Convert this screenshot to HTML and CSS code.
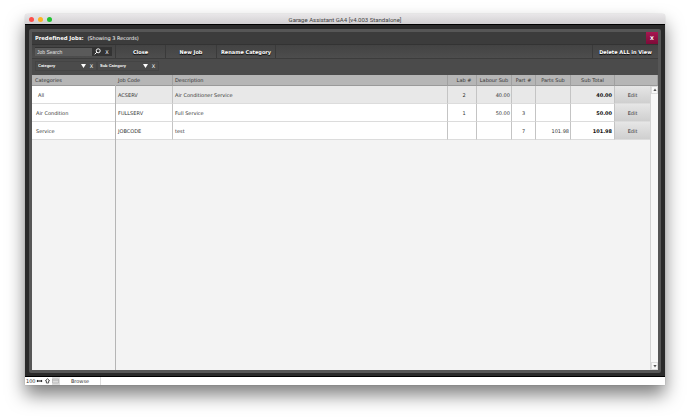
FILE: index.html
```
<!DOCTYPE html>
<html lang="en">

<head>
  <meta charset="UTF-8">
  <title>Garage Assistant GA4</title>
  <link rel="stylesheet" href="styles.css">
</head>

<body>
  <div class="window">
    <header class="titlebar">
      <div class="lights">
        <span class="light red"></span>
        <span class="light yellow"></span>
        <span class="light green"></span>
      </div>
      <span class="app-title">Garage Assistant GA4 [v4.003 Standalone]</span>
    </header>

    <div class="frame">
      <main class="panel">
        <div class="heading">
          <h1>Predefined Jobs:</h1>
          <span class="count">(Showing 3 Records)</span>
          <button class="close" type="button" aria-label="Close window">X</button>
        </div>

        <div class="toolbar">
          <form class="search">
            <input type="text" placeholder="Job Search" aria-label="Job Search">
            <button type="button" aria-label="Search">
              <svg class="glass" viewBox="0 0 7 7">
                <circle cx="4.2" cy="2.8" r="2" />
                <path d="M2.8 4.2L.7 6.3" />
              </svg>
            </button>
            <button type="button" aria-label="Clear search">X</button>
          </form>
          <button class="tool" type="button">Close</button>
          <button class="tool" type="button">New Job</button>
          <button class="tool" type="button">Rename Category</button>
          <button class="tool delete" type="button">Delete ALL in View</button>
        </div>

        <div class="filters">
          <div class="filter">
            <select aria-label="Category">
              <option>Category</option>
            </select>
            <svg class="arrow" viewBox="0 0 5 4"><path d="M0 0h5L2.5 4z" /></svg>
            <button type="button" aria-label="Clear category">X</button>
          </div>
          <div class="filter">
            <select aria-label="Sub Category">
              <option>Sub Category</option>
            </select>
            <svg class="arrow" viewBox="0 0 5 4"><path d="M0 0h5L2.5 4z" /></svg>
            <button type="button" aria-label="Clear sub category">X</button>
          </div>
        </div>

        <div class="content">
          <aside class="categories">
            <h2>Categories</h2>
            <ul>
              <li class="all"><a href="#">All</a></li>
              <li><a href="#">Air Condition</a></li>
              <li><a href="#">Service</a></li>
            </ul>
          </aside>

          <section class="jobs">
            <table>
              <colgroup>
                <col class="col-code">
                <col>
                <col class="col-lab">
                <col class="col-sub">
                <col class="col-part">
                <col class="col-sub">
                <col class="col-total">
                <col class="col-edit">
                <col class="col-scroll">
              </colgroup>
              <thead>
                <tr>
                  <th class="left">Job Code</th>
                  <th class="left">Description</th>
                  <th class="lab">Lab #</th>
                  <th>Labour Sub</th>
                  <th>Part #</th>
                  <th>Parts Sub</th>
                  <th>Sub Total</th>
                  <th colspan="2"></th>
                </tr>
              </thead>
              <tbody>
                <tr class="selected">
                  <td>ACSERV</td>
                  <td>Air Conditioner Service</td>
                  <td class="num lab">2</td>
                  <td class="money">40.00</td>
                  <td class="num"></td>
                  <td class="money"></td>
                  <td class="total">40.00</td>
                  <td class="action"><button type="button">Edit</button></td>
                  <td class="gutter"></td>
                </tr>
                <tr>
                  <td>FULLSERV</td>
                  <td>Full Service</td>
                  <td class="num lab">1</td>
                  <td class="money">50.00</td>
                  <td class="num">3</td>
                  <td class="money"></td>
                  <td class="total">50.00</td>
                  <td class="action"><button type="button">Edit</button></td>
                  <td class="gutter"></td>
                </tr>
                <tr>
                  <td>JOBCODE</td>
                  <td>test</td>
                  <td class="num lab"></td>
                  <td class="money"></td>
                  <td class="num">7</td>
                  <td class="money">101.98</td>
                  <td class="total">101.98</td>
                  <td class="action"><button type="button">Edit</button></td>
                  <td class="gutter"></td>
                </tr>
              </tbody>
            </table>
            <div class="scrollbar">
              <button type="button" aria-label="Scroll up">
                <svg viewBox="0 0 4 4"><path d="M2 .5L3.6 3H.4z" /></svg>
              </button>
              <button type="button" aria-label="Scroll down">
                <svg viewBox="0 0 4 4"><path d="M2 3.5L3.6 1H.4z" /></svg>
              </button>
            </div>
          </section>
        </div>
      </main>
    </div>

    <footer class="statusbar">
      <span class="zoom">100</span>
      <button type="button" aria-label="Zoom out">
        <svg viewBox="0 0 7 6"><path d="M.5 3L2 1.8v.7h3v-.7L6.5 3 5 4.2v-.7H2v.7z" /></svg>
      </button>
      <button type="button" aria-label="Zoom in">
        <svg viewBox="0 0 7 6"><path d="M3.5 .6L5.6 2.8H4.6V5H2.4V2.8H1.4z" fill="#fff" stroke="#333" stroke-width=".8" /></svg>
      </button>
      <button class="toggle" type="button" aria-label="Toggle toolbar">
        <svg viewBox="0 0 7 6"><path d="M.5 1h6v4h-6zM.5 2.2h6" fill="none" stroke="#aaa" stroke-width=".6" /></svg>
      </button>
      <span class="mode">Browse</span>
    </footer>
  </div>
</body>

</html>
```

FILE: styles.css
```
* {
  box-sizing: border-box;
}

body {
  margin: 0;
  height: 100vh;
  padding: 14px 25px 35px;
  background: #fff;
  font-family: "DejaVu Sans", Verdana, sans-serif;
  font-size: 5px;
  line-height: 8px;
  color: #333;
}

h1,
h2,
ul {
  margin: 0;
  padding: 0;
  font-size: inherit;
  list-style: none;
}

button,
input,
select {
  margin: 0;
  padding: 0;
  border: none;
  background: none;
  font: inherit;
  color: inherit;
}

a {
  color: inherit;
  text-decoration: none;
}

svg {
  display: block;
}

.window {
  display: flex;
  flex-direction: column;
  height: 100%;
  border-radius: 3px 3px 0 0;
  box-shadow: 0 10px 18px rgba(0, 0, 0, 0.5), 0 0 1px rgba(0, 0, 0, 0.4);
}

/* title bar */
.titlebar {
  display: grid;
  grid-template-columns: 1fr auto 1fr;
  align-items: center;
  height: 10px;
  border-radius: 3px 3px 0 0;
  background: linear-gradient(#e9e7e9, #d2d0d2);
}

.lights {
  display: flex;
  gap: 4px;
  padding-left: 4px;
}

.light {
  width: 5px;
  height: 5px;
  border-radius: 50%;
}

.red {
  background: #fc4f4b;
}

.yellow {
  background: #fdb424;
}

.green {
  background: #1fc331;
}

.app-title {
  padding-top: 1px;
  font-family: Roboto, sans-serif;
  font-size: 6px;
  color: #444;
}

/* dark frame */
.frame {
  flex: 1;
  display: flex;
  padding: 4px 4px 3px;
  border-top: 1px solid #000;
  border-bottom: 1px solid #000;
  background: #2a2a2a;
}

.panel {
  flex: 1;
  display: flex;
  flex-direction: column;
  border: 3px solid #565656;
  border-radius: 2px;
  background: #4b4b4b;
  color: #fff;
}

.heading {
  display: flex;
  align-items: center;
  gap: 4px;
  height: 12px;
  padding-left: 3px;
  background: #3c3c3c;
}

.heading h1 {
  font-family: "Noto Sans", sans-serif;
  font-size: 6px;
}

.close {
  align-self: stretch;
  width: 12px;
  margin-left: auto;
  background: linear-gradient(#a81650, #7d0b38);
  font-weight: bold;
}

.toolbar {
  display: flex;
  height: 15px;
  border-top: 1px solid #333;
  border-bottom: 1px solid #3c3c3c;
  background: linear-gradient(#434343, #4d4d4d);
}

.search {
  display: flex;
  align-items: center;
  width: 77px;
  height: 9px;
  margin: 2px 3px;
  background: #333;
}

.search input {
  flex: 1;
  min-width: 0;
  height: 8px;
  padding-left: 2px;
  background: #5a5a5a;
  font-family: "Liberation Sans", Arial, sans-serif;
}

.search input::placeholder {
  color: #e0e0e0;
}

.search button {
  width: 10px;
}

.glass {
  width: 7px;
  height: 7px;
  margin: auto;
  fill: none;
  stroke: #fff;
}

.tool {
  min-width: 51px;
  padding: 0 4px;
  border-right: 1px solid #3a3a3a;
  font-weight: bold;
  text-shadow: 0 1px 1px #000;
}

.search + .tool {
  border-left: 1px solid #3a3a3a;
}

.delete {
  min-width: 66px;
  margin-left: auto;
  border-right: none;
  border-left: 1px solid #3a3a3a;
}

.filters {
  display: flex;
  height: 16px;
  padding: 2px 3px 4px;
}

.filter {
  display: flex;
  align-items: center;
  width: 62px;
  height: 10px;
  border: 1px solid #444;
  color: #fff;
}

.filter select {
  flex: 1;
  min-width: 0;
  padding-left: 2px;
  appearance: none;
  font-family: "Liberation Sans", Arial, sans-serif;
  font-size: 4px;
  font-weight: bold;
}

.arrow {
  width: 5px;
  height: 4px;
  margin-right: 1px;
  fill: #fff;
  pointer-events: none;
}

.filter button {
  width: 9px;
}

/* lists */
.content {
  flex: 1;
  display: grid;
  grid-template-columns: 84px 1fr;
  background: #f3f3f3;
  color: #333;
}

.categories {
  border-right: 1px solid #b5b5b5;
}

.categories h2,
th {
  height: 11px;
  border-bottom: 1px solid #9a9a9a;
  background: #b6b6b6;
  font-weight: normal;
  color: #333;
}

.categories h2 {
  padding: 1px 3px;
}

.categories li {
  height: 18px;
  padding: 5px 4px;
  border-bottom: 1px solid #dcdcdc;
  background: #fff;
}

.categories .all {
  padding-left: 6px;
}

.jobs {
  position: relative;
}

table {
  width: 100%;
  border-collapse: separate;
  border-spacing: 0;
  table-layout: fixed;
}

.col-code {
  width: 57px;
}

.col-lab {
  width: 29px;
}

.col-sub {
  width: 35px;
}

.col-part {
  width: 24px;
}

.col-total {
  width: 44px;
}

.col-edit {
  width: 35px;
}

.col-scroll {
  width: 8px;
}

th {
  padding: 0;
  border-right: 1px solid #a0a0a0;
}

.left {
  padding-left: 2px;
  text-align: left;
}

td {
  height: 18px;
  padding: 0 1px 0 2px;
  border-right: 1px solid #c4c4c4;
  border-bottom: 1px solid #dcdcdc;
  background: #fff;
}

.selected td {
  background: #e8e8e8;
}

.num {
  padding: 0;
  text-align: center;
}

.lab {
  padding-left: 4px;
}

.money,
.total {
  text-align: right;
}

.total {
  padding-right: 2px;
  font-weight: bold;
  color: #111;
}

.action {
  padding: 0;
  border-right: none;
}

.action button {
  display: block;
  width: 100%;
  height: 17px;
  background: linear-gradient(#e6e6e6, #cfcfcf);
}

.gutter {
  border: none;
}

.scrollbar {
  position: absolute;
  top: 11px;
  right: 0;
  bottom: 0;
  display: flex;
  flex-direction: column;
  justify-content: space-between;
  width: 8px;
  border-left: 1px solid #d5d5d5;
  background: #f8f8f8;
}

.scrollbar button {
  height: 8px;
  border: 1px solid #dcdcdc;
}

.scrollbar svg {
  width: 4px;
  height: 4px;
  margin: auto;
  fill: #555;
}

/* status bar */
.statusbar {
  display: flex;
  align-items: center;
  height: 8px;
  background: #fff;
}

.zoom {
  width: 11px;
  padding-left: 1px;
}

.statusbar button {
  width: 8px;
  height: 8px;
}

.statusbar svg {
  width: 7px;
  height: 6px;
}

.toggle {
  background: #ddd;
}

.mode {
  width: 41px;
  border-right: 1px solid #ddd;
  text-align: center;
}
```
